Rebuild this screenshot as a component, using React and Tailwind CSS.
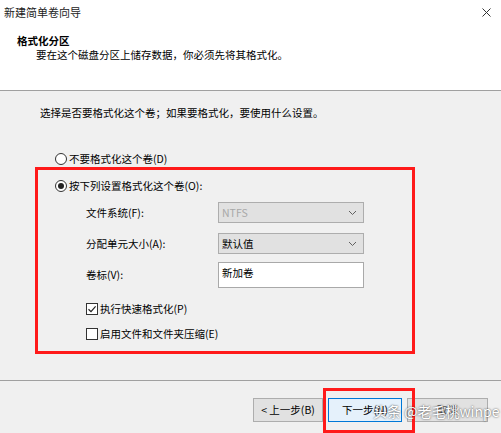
import React from 'react';

function Radio({ checked }) {
  return (
    <span className="w-[12px] h-[12px] rounded-full border border-[#333333] bg-white flex items-center justify-center shrink-0">
      {checked && <span className="w-[6px] h-[6px] rounded-full bg-[#222222]"></span>}
    </span>
  );
}

function Checkbox({ checked }) {
  return (
    <span className="w-[12px] h-[12px] border border-[#333333] bg-white flex items-center justify-center shrink-0">
      {checked && (
        <svg width="10" height="10" viewBox="0 0 10 10">
          <path d="M1.5 5.2 L4 7.6 L8.6 2.4" fill="none" stroke="#222" strokeWidth="1.2" />
        </svg>
      )}
    </span>
  );
}

function Combo({ value, muted }) {
  return (
    <div className="w-[146px] h-[21px] bg-[#e1e1e1] border border-[#adadad] flex items-center justify-between pl-[3px] pr-[6px]">
      <span className={muted ? 'text-[#a8a8a8]' : 'text-black'}>{value}</span>
      <svg width="9" height="6" viewBox="0 0 9 6">
        <path d="M1 1 L4.5 4.5 L8 1" fill="none" stroke="#606060" strokeWidth="1" />
      </svg>
    </div>
  );
}

export default function App() {
  return (
    <div className="w-[501px] h-[433px] bg-[#f0f0f0] relative overflow-hidden font-['Noto_Sans_CJK_SC',sans-serif] text-[10.5px] text-black">
      {/* 顶部白色区域 */}
      <div className="h-[91px] bg-white border-b border-[#a0a0a0]">
        <div className="flex justify-between items-center h-[24px] pl-[4px] pr-[10px]">
          <span className="text-[11px] text-[#222222]">新建简单卷向导</span>
          <svg width="9" height="9" viewBox="0 0 9 9">
            <path d="M0.5 0.5 L8.5 8.5 M8.5 0.5 L0.5 8.5" stroke="#333" strokeWidth="1" />
          </svg>
        </div>
        <div className="pl-[17px] mt-[10px] font-bold leading-[14px]">格式化分区</div>
        <div className="pl-[36px] leading-[14px]">要在这个磁盘分区上储存数据，你必须先将其格式化。</div>
      </div>

      <div className="pl-[40px] pt-[15px] leading-[14px]">选择是否要格式化这个卷；如果要格式化，要使用什么设置。</div>

      <div className="pl-[55px] mt-[32px] flex items-center gap-[2px] h-[14px] leading-[14px]">
        <Radio />
        <span>不要格式化这个卷(D)</span>
      </div>

      {/* 红框标注 */}
      <div className="ml-[35px] mt-[1px] w-[380px] h-[187px] border-[3px] border-[#ff1a1a] pt-[9px]">
        <div className="pl-[17px] flex items-center gap-[2px] h-[14px] leading-[14px]">
          <Radio checked />
          <span>按下列设置格式化这个卷(O):</span>
        </div>
        <div className="pl-[48px] mt-[9px] flex flex-col">
          <div className="flex items-center h-[21px]">
            <span className="w-[132px]">文件系统(F):</span>
            <Combo value="NTFS" muted />
          </div>
          <div className="flex items-center h-[21px] mt-[10px]">
            <span className="w-[132px]">分配单元大小(A):</span>
            <Combo value="默认值" />
          </div>
          <div className="flex items-start h-[26px] mt-[8px]">
            <span className="w-[132px] mt-[5px]">卷标(V):</span>
            <div className="w-[146px] h-[26px] bg-white border border-[#a9a9a9] px-[3px] pt-[3px] leading-[14px]">新加卷</div>
          </div>
          <div className="flex items-center gap-[2px] h-[14px] mt-[14px]">
            <Checkbox checked />
            <span>执行快速格式化(P)</span>
          </div>
          <div className="flex items-center gap-[2px] h-[14px] mt-[11px]">
            <Checkbox />
            <span>启用文件和文件夹压缩(E)</span>
          </div>
        </div>
      </div>

      {/* 底部按钮区 */}
      <div className="mt-[26px] border-t border-[#a0a0a0] pt-[17px] flex pl-[253px] gap-[5px]">
        <button className="w-[70px] h-[24px] bg-[#e1e1e1] border border-[#adadad] flex items-center justify-center">&lt; 上一步(B)</button>
        <button className="w-[74px] h-[24px] bg-[#e5f1fb] border border-[#0078d7] flex items-center justify-center">下一步(N)</button>
        <button className="w-[81px] h-[24px] bg-[#e1e1e1] border border-[#adadad] flex items-center justify-center text-[#555555]">取消</button>
      </div>

      <div className="absolute left-[323px] top-[388px] w-[92px] h-[45px] border-[3px] border-[#ff1a1a]"></div>

      <div className="absolute left-[373px] top-[402px] text-[14px] leading-[18px] text-white [text-shadow:0_0_2px_rgba(0,0,0,0.8)] whitespace-nowrap">头条 @老毛桃winpe</div>
    </div>
  );
}
